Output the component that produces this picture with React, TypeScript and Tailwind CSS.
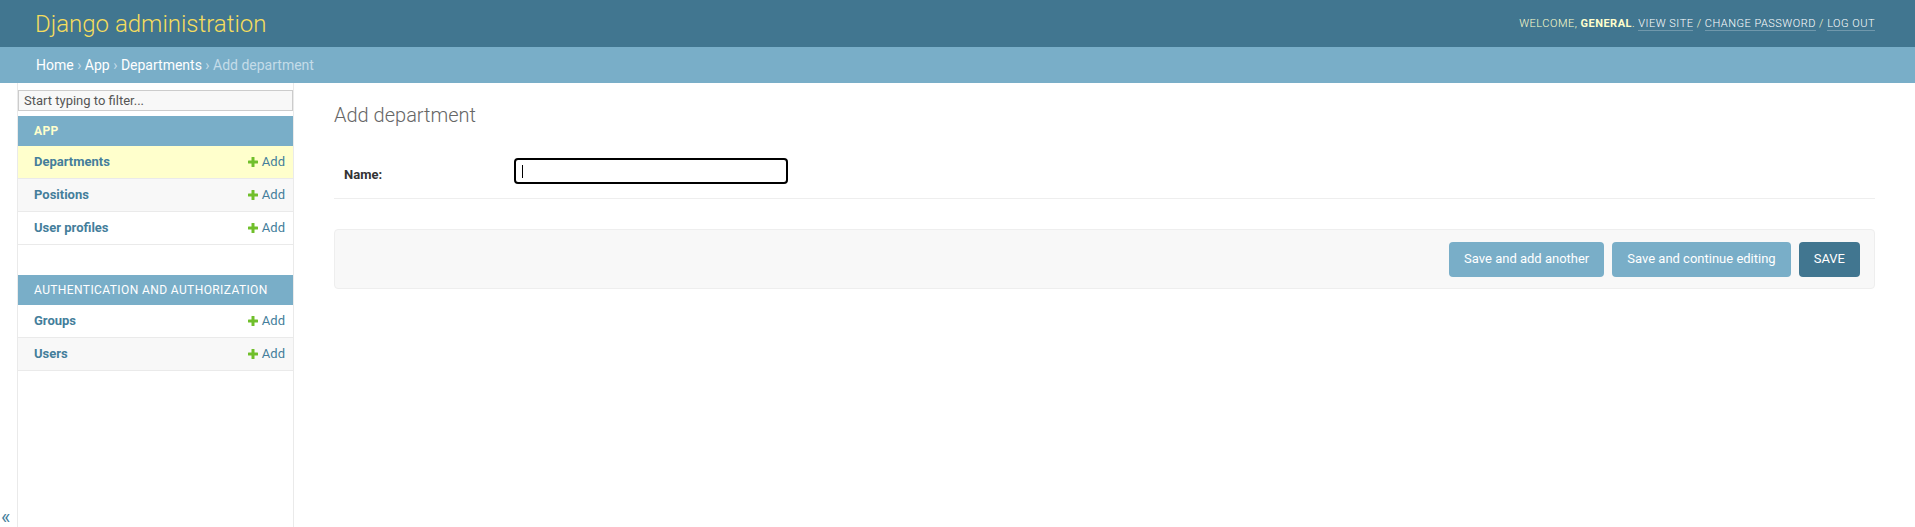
import React from 'react'

const FONT = { fontFamily: 'Roboto, "Liberation Sans", Arial, sans-serif' }

const AddIcon = () => (
    <svg width="10" height="10" viewBox="0 0 10 10" className="mr-[4px] shrink-0">
        <rect x="3.5" y="0" width="3" height="10" rx="0.5" fill="#70bf2b" />
        <rect x="0" y="3.5" width="10" height="3" rx="0.5" fill="#70bf2b" />
    </svg>
)

interface ModelRow {
    name: string
    current?: boolean
}

interface AppModule {
    title: string
    current?: boolean
    models: ModelRow[]
}

const MODULES: AppModule[] = [
    {
        title: 'App',
        current: true,
        models: [{ name: 'Departments', current: true }, { name: 'Positions' }, { name: 'User profiles' }],
    },
    {
        title: 'Authentication and Authorization',
        models: [{ name: 'Groups' }, { name: 'Users' }],
    },
]

const Header = () => (
    <div className="flex items-center justify-between h-[47px] bg-[#417690] pl-[35px] pr-[40px]">
        <h1 className="text-[24px] font-light text-[#f5dd5d] leading-[28px]">Django administration</h1>
        <div className="text-[11px] uppercase tracking-[0.5px] text-[#ffc] font-light leading-[14px]">
            Welcome, <strong className="font-bold">General</strong>.{' '}
            <a className="text-white border-b border-white/25">View site</a> /{' '}
            <a className="text-white border-b border-white/25">Change password</a> /{' '}
            <a className="text-white border-b border-white/25">Log out</a>
        </div>
    </div>
)

const Breadcrumbs = () => (
    <div className="h-[36px] bg-[#79aec8] px-[36px] py-[10px] text-[14px] leading-[16px] text-[#c4dce8]">
        <a className="text-white">Home</a> › <a className="text-white">App</a> ›{' '}
        <a className="text-white">Departments</a> › Add department
    </div>
)

const Sidebar = () => (
    <nav className="w-[276px] shrink-0 border-r border-[#eaeaea] pt-[7px]">
        <div className="h-[21px] border border-[#ccc] bg-[#f8f8f8] px-[5px] text-[13px] leading-[19px] text-[#555]">
            Start typing to filter...
        </div>
        <div className="mt-[5px]">
            {MODULES.map(mod => (
                <div key={mod.title} className="mb-[30px]">
                    <div
                        className={
                            mod.current
                                ? 'h-[30px] bg-[#79aec8] pl-[16px] flex items-center text-[12px] tracking-[0.4px] uppercase font-bold text-[#ffc]'
                                : 'h-[30px] bg-[#79aec8] pl-[16px] flex items-center text-[12px] tracking-[0.4px] uppercase text-white'
                        }
                    >
                        {mod.title}
                    </div>
                    {mod.models.map((m, i) => (
                        <div
                            key={m.name}
                            className={
                                m.current
                                    ? 'h-[33px] border-b border-[#eaeaea] bg-[#ffffcc] flex items-center justify-between pl-[16px] pr-[8px] text-[13px] text-[#447e9b]'
                                    : i % 2 === 1
                                      ? 'h-[33px] border-b border-[#eaeaea] bg-[#f8f8f8] flex items-center justify-between pl-[16px] pr-[8px] text-[13px] text-[#447e9b]'
                                      : 'h-[33px] border-b border-[#eaeaea] bg-white flex items-center justify-between pl-[16px] pr-[8px] text-[13px] text-[#447e9b]'
                            }
                        >
                            <span className="font-bold">{m.name}</span>
                            <span className="flex items-center">
                                <AddIcon />
                                Add
                            </span>
                        </div>
                    ))}
                </div>
            ))}
        </div>
    </nav>
)

const Content = () => (
    <main className="flex-1 px-[40px] pt-[20px]">
        <h1 className="h-[24px] leading-[24px] text-[20px] font-light text-[#666] mb-[21px]">Add department</h1>
        <div className="flex items-start border-b border-[#eee] h-[51px] pt-[10px] pl-[10px]">
            <label className="w-[170px] pt-[9px] text-[13px] font-bold text-[#333] leading-[16px]">Name:</label>
            <div className="w-[274px] h-[26px] border-2 border-black rounded-[4px] flex items-center pl-[6px]">
                <div className="w-px h-[13px] bg-black" />
            </div>
        </div>
        <div className="mt-[30px] h-[60px] border border-[#eee] bg-[#f8f8f8] rounded-[4px] px-[14px] flex items-center justify-end gap-[8px]">
            <button className="h-[35px] px-[15px] rounded-[4px] bg-[#79aec8] text-white text-[13px]">
                Save and add another
            </button>
            <button className="h-[35px] px-[15px] rounded-[4px] bg-[#79aec8] text-white text-[13px]">
                Save and continue editing
            </button>
            <button className="h-[35px] px-[15px] rounded-[4px] bg-[#417690] text-white text-[13px]">SAVE</button>
        </div>
    </main>
)

export default function App() {
    return (
        <div className="min-h-screen flex flex-col bg-white" style={FONT}>
            <Header />
            <Breadcrumbs />
            <div className="flex flex-1">
                <div className="w-[18px] shrink-0 border-r border-[#eaeaea] flex items-end">
                    <span className="text-[20px] leading-[20px] text-[#447e9b] pl-[1px]">«</span>
                </div>
                <Sidebar />
                <Content />
            </div>
        </div>
    )
}
